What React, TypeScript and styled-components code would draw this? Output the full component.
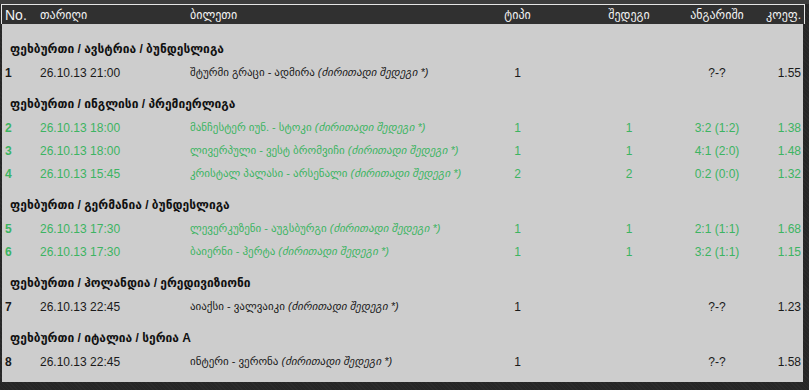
import { FC } from "react"
import styled, { createGlobalStyle } from "styled-components"

const GlobalStyle = createGlobalStyle`
  html, body {
    margin: 0;
    padding: 0;
  }
  body {
    width: 809px;
    height: 390px;
    overflow: hidden;
    background: repeating-linear-gradient(45deg, #2b2b2b 0 1px, #262626 1px 3px);
    font-family: "Liberation Sans", "DejaVu Sans", sans-serif;
  }
`

const TopStrip = styled.div`
  height: 4px;
  background: #3c3c3c;
`

const Table = styled.div`
  margin-left: 1px;
  width: 804px;
`

const columns = "35px 150px 280px 95px 128px 48px 60px"

const HeaderRow = styled.div`
  display: grid;
  grid-template-columns: ${columns};
  align-items: center;
  height: 19px;
  padding: 0 2px 0 3px;
  background: #303030;
  border: 1px solid #e4e4e4;
  border-bottom: none;
  color: #f2f2f2;
  font-size: 12px;
`

const Cell = styled.div<{ $align?: "left" | "center" | "right" }>`
  white-space: nowrap;
  justify-self: ${(p) => (p.$align === "center" ? "center" : p.$align === "right" ? "end" : "start")};
`

const NoHead = styled(Cell)`
  font-size: 14px;
`

const Body = styled.div`
  background: #cdcdcd;
  padding: 4px 2px 10px 3px;
  margin-left: 1px;
  width: 801px;
  box-sizing: border-box;
`

const GroupTitle = styled.div`
  height: 22px;
  margin-top: 10px;
  display: flex;
  align-items: center;
  padding-left: 5px;
  font-size: 12px;
  font-weight: bold;
  color: #111;
`

const Row = styled.div<{ $won: boolean }>`
  display: grid;
  grid-template-columns: ${columns};
  align-items: center;
  height: 23px;
  padding-top: 2px;
  box-sizing: border-box;
  font-size: 12px;
  color: ${(p) => (p.$won ? "#3cb462" : "#1a1a1a")};
`

const Num = styled(Cell)`
  font-weight: bold;
`

const Ticket = styled(Cell)`
  font-size: 11px;
`

const Note = styled.span`
  font-style: italic;
`

type Bet = {
  no: number
  date: string
  match: string
  type: string
  result: string
  score: string
  coef: string
}

type Group = { title: string; bets: Bet[] }

const groups: Group[] = [
  {
    title: "ფეხბურთი / ავსტრია / ბუნდესლიგა",
    bets: [{ no: 1, date: "26.10.13 21:00", match: "შტურმი გრაცი - ადმირა", type: "1", result: "", score: "?-?", coef: "1.55" }],
  },
  {
    title: "ფეხბურთი / ინგლისი / პრემიერლიგა",
    bets: [
      { no: 2, date: "26.10.13 18:00", match: "მანჩესტერ იუნ. - სტოკი", type: "1", result: "1", score: "3:2 (1:2)", coef: "1.38" },
      { no: 3, date: "26.10.13 18:00", match: "ლივერპული - ვესტ ბრომვიჩი", type: "1", result: "1", score: "4:1 (2:0)", coef: "1.48" },
      { no: 4, date: "26.10.13 15:45", match: "კრისტალ პალასი - არსენალი", type: "2", result: "2", score: "0:2 (0:0)", coef: "1.32" },
    ],
  },
  {
    title: "ფეხბურთი / გერმანია / ბუნდესლიგა",
    bets: [
      { no: 5, date: "26.10.13 17:30", match: "ლევერკუზენი - აუგსბურგი", type: "1", result: "1", score: "2:1 (1:1)", coef: "1.68" },
      { no: 6, date: "26.10.13 17:30", match: "ბაიერნი - ჰერტა", type: "1", result: "1", score: "3:2 (1:1)", coef: "1.15" },
    ],
  },
  {
    title: "ფეხბურთი / ჰოლანდია / ერედივიზიონი",
    bets: [{ no: 7, date: "26.10.13 22:45", match: "აიაქსი - ვალვაიკი", type: "1", result: "", score: "?-?", coef: "1.23" }],
  },
  {
    title: "ფეხბურთი / იტალია / სერია A",
    bets: [{ no: 8, date: "26.10.13 22:45", match: "ინტერი - ვერონა", type: "1", result: "", score: "?-?", coef: "1.58" }],
  },
]

const App: FC = () => {
  return (
    <>
      <GlobalStyle />
      <TopStrip />
      <Table>
        <HeaderRow>
          <NoHead>No.</NoHead>
          <Cell>თარიღი</Cell>
          <Cell>ბილეთი</Cell>
          <Cell $align="center">ტიპი</Cell>
          <Cell $align="center">შედეგი</Cell>
          <Cell $align="center">ანგარიში</Cell>
          <Cell $align="right">კოეფ.</Cell>
        </HeaderRow>
        <Body>
          {groups.map((g) => (
            <div key={g.title}>
              <GroupTitle>{g.title}</GroupTitle>
              {g.bets.map((b) => (
                <Row key={b.no} $won={b.result !== ""}>
                  <Num>{b.no}</Num>
                  <Cell>{b.date}</Cell>
                  <Ticket>
                    {b.match} <Note>(ძირითადი შედეგი *)</Note>
                  </Ticket>
                  <Cell $align="center">{b.type}</Cell>
                  <Cell $align="center">{b.result}</Cell>
                  <Cell $align="center">{b.score}</Cell>
                  <Cell $align="right">{b.coef}</Cell>
                </Row>
              ))}
            </div>
          ))}
        </Body>
      </Table>
    </>
  )
}

export default App
